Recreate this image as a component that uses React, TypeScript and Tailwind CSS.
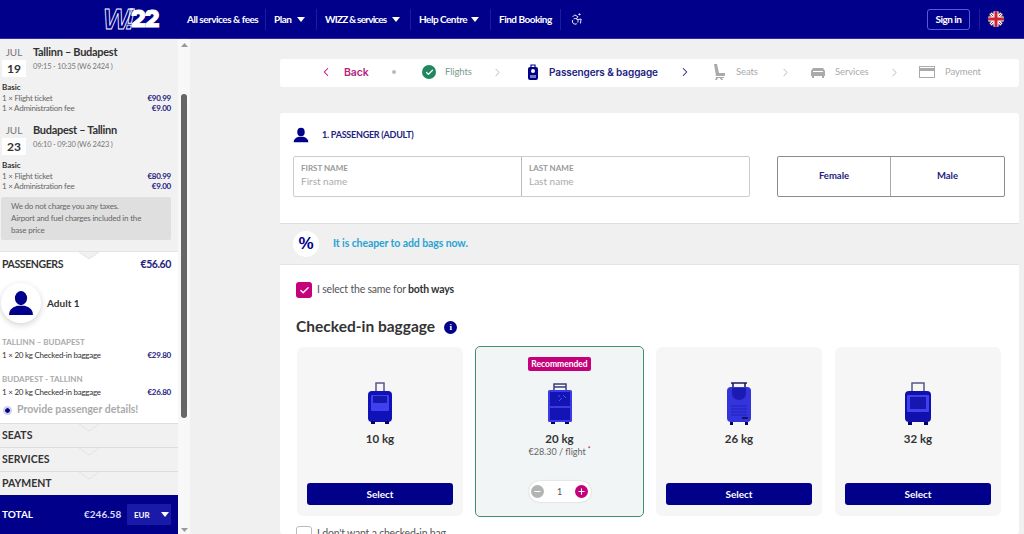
import React from "react";
import { Accessibility, Check, ChevronLeft, ChevronRight, Minus, Plus } from "lucide-react";

const Caret = ({ className = "" }: { className?: string }) => (
  <svg width="8" height="5" viewBox="0 0 8 5" className={className}><path d="M0 0h8L4 5z" fill="currentColor" /></svg>
);

const Person = ({ size }: { size: number }) => (
  <svg width={size} height={size} viewBox="0 0 24 24">
    <ellipse cx="12" cy="7.5" rx="5.6" ry="6.5" fill="#00008b" />
    <path d="M1 23c0-5 3-7 7.5-8.5h7C20 16 23 18 23 23z" fill="#00008b" />
  </svg>
);

const Row = ({ l, r, dark }: { l: string; r: string; dark?: boolean }) => (
  <div className={`flex justify-between text-[8px] tracking-[-0.25px] leading-[10px] h-[10px] pr-[7px] pl-[2px] ${dark ? "text-[#333]" : "text-[#666]"}`}>
    <span>{l}</span><span className="font-bold text-[#22227f]">{r}</span>
  </div>
);

const Flight = ({ d, t, s, a }: { d: string; t: string; s: string; a: string }) => (
  <div>
    <div className="flex h-[33px]">
      <div className="ml-[2px] w-[24px] flex flex-col items-center">
        <div className="h-[16px] text-[10px] leading-[16px] text-[#777]">JUL</div>
        <div className="h-[17px] w-[24px] bg-white text-center text-[12px] leading-[17px] font-bold text-[#333]">{d}</div>
      </div>
      <div className="ml-[7px]">
        <div className="text-[11px] tracking-[-0.3px] leading-[16px] font-bold text-[#333]">{t}</div>
        <div className="mt-[1px] text-[7.5px] tracking-[-0.2px] leading-[12px] text-[#777]">{s}</div>
      </div>
    </div>
    <div className="mt-[5px] pl-[2px] text-[8px] leading-[10px] h-[10px] font-bold text-[#333]">Basic</div>
    <div className="mt-[1px]"><Row l="1 × Flight ticket" r={a} /></div>
    <div><Row l="1 × Administration fee" r="€9.00" /></div>
  </div>
);

const Notch = ({ fill }: { fill: string }) => (
  <svg width="20" height="7" viewBox="0 0 20 7" className="mx-auto block"><path d="M0 0l10 7 10-7z" fill={fill} /><path d="M0 0l10 7 10-7" fill="none" stroke="#e2e2e2" /></svg>
);

const Section = ({ label, h }: { label: string; h: string }) => (
  <div className={`${h} bg-[#f1f1f1] border-t border-[#dddddd]`}>
    <div className="h-0 overflow-visible"><Notch fill="#f1f1f1" /></div>
    <div className="pl-[2px] pt-[4px] text-[10.5px] leading-[14px] font-bold text-[#333]">{label}</div>
  </div>
);

const Sidebar = () => (
  <div className="flex w-[190px] h-[495px] shrink-0">
    <div className="w-[178px] flex flex-col relative h-[495px]">
      <div className="h-[213px] bg-[#f1f1f1] pt-[5px] border-b border-[#e4e4e4]">
        <Flight d="19" t="Tallinn – Budapest" s="09:15 - 10:35 (W6 2424 )" a="€90.99" />
        <div className="mt-[9px]"><Flight d="23" t="Budapest – Tallinn" s="06:10 - 09:30 (W6 2423 )" a="€80.99" /></div>
        <div className="mt-[6px] ml-[1px] mr-[7px] h-[43px] bg-[#dfdfdf] rounded-[2px] pl-[10px] pt-[3px] text-[8px] tracking-[-0.2px] leading-[12px] text-[#666]">
          <div>We do not charge you any taxes.</div>
          <div>Airport and fuel charges included in the</div>
          <div>base price</div>
        </div>
      </div>
      <div className="h-[171px] bg-white">
        <div className="h-0"><Notch fill="#f1f1f1" /></div>
        <div className="flex justify-between pl-[2px] pr-[7px] pt-[5px] h-[31px] text-[10.5px] tracking-[-0.4px] leading-[14px] font-bold">
          <span className="text-[#333]">PASSENGERS</span><span className="text-[#22227f]">€56.60</span>
        </div>
        <div className="flex items-center h-[40px]">
          <div className="ml-[1px] w-[40px] h-[40px] rounded-full bg-white shadow-[0_2px_6px_rgba(0,0,0,0.18)] flex items-center justify-center"><Person size={26} /></div>
          <span className="ml-[6px] text-[10px] font-bold text-[#333]">Adult 1</span>
        </div>
        <div className="mt-[13px] pl-[2px] h-[12px] text-[8px] leading-[12px] font-bold text-[#aaa]">TALLINN – BUDAPEST</div>
        <div className="mt-[2px]"><Row dark l="1 × 20 kg Checked-in baggage" r="€29.80" /></div>
        <div className="mt-[13px] pl-[2px] h-[12px] text-[8px] leading-[12px] font-bold text-[#aaa]">BUDAPEST - TALLINN</div>
        <div className="mt-[2px]"><Row dark l="1 × 20 kg Checked-in baggage" r="€26.80" /></div>
        <div className="mt-[6px] flex items-center h-[14px]">
          <div className="ml-[5px] w-[5px] h-[5px] rounded-full bg-[#00008b] outline-2 outline-[#cfcfe8]" />
          <span className="ml-[7px] text-[10.5px] font-bold text-[#aaa]">Provide passenger details!</span>
        </div>
      </div>
      <Section label="SEATS" h="h-[24px]" />
      <Section label="SERVICES" h="h-[24px]" />
      <Section label="PAYMENT" h="h-[24px]" />
    </div>
    <div className="w-[12px] bg-[#f8f8f8] flex flex-col items-center">
      <svg width="7" height="4" viewBox="0 0 7 4" className="mt-[4px] text-[#999]"><path d="M0 4h7L3.5 0z" fill="currentColor" /></svg>
      <div className="mt-[47px] w-[6px] h-[324px] rounded-[3px] bg-[#666]" />
    </div>
  </div>
);

const Footer = () => (
  <div className="flex w-[190px] h-[39px]">
    <div className="w-[178px] bg-[#00008b] flex items-center text-white font-bold text-[10px] pl-[2px]">
      <span className="w-[82px]">TOTAL</span>
      <span className="w-[36px] whitespace-nowrap text-[#d9d9f5]">€246.58</span>
      <div className="ml-[7px] w-[44px] h-[21px] bg-[#1a1aa8] rounded-[1px] flex items-center pl-[7px] text-[8px]">
        <span>EUR</span><Caret className="ml-[11px]" />
      </div>
    </div>
    <div className="w-[12px] bg-[#f8f8f8] flex justify-center">
      <svg width="7" height="4" viewBox="0 0 7 4" className="mt-[33px] text-[#999]"><path d="M0 0h7L3.5 4z" fill="currentColor" /></svg>
    </div>
  </div>
);

const NavSep = () => <div className="w-px h-[21px] bg-[#1c1c9c]" />;

const Header = () => (
  <div className="h-[39px] bg-[#00008b] border-b border-[#2a2aa5] flex items-center whitespace-nowrap text-white text-[10px] tracking-[-0.5px] font-bold shrink-0">
    <div className="ml-[103px] w-[60px] h-[30px] flex items-center leading-none italic">
      <span className="w-[28px] font-['Liberation_Sans',sans-serif] text-[29px] font-bold tracking-[-5px] text-transparent [-webkit-text-stroke:0.8px_#ffffff]">W!</span>
      <span className="font-['Inter',sans-serif] text-[23px] font-black not-italic tracking-[-1px] [-webkit-text-stroke:0.8px_#ffffff]">22</span>
    </div>
    <span className="ml-[24px] w-[70px]">All services &amp; fees</span>
    <span className="ml-[8px]" /><NavSep />
    <span className="ml-[8px] w-[18px]">Plan</span><Caret className="ml-[5px]" />
    <span className="ml-[11px]" /><NavSep />
    <span className="ml-[8px] w-[61px] tracking-[-0.8px]">WIZZ &amp; services</span><Caret className="ml-[6px]" />
    <span className="ml-[10px]" /><NavSep />
    <span className="ml-[8px] w-[47px]">Help Centre</span><Caret className="ml-[5px]" />
    <span className="ml-[11px]" /><NavSep />
    <span className="ml-[8px] w-[53px]">Find Booking</span>
    <span className="ml-[8px]" /><NavSep />
    <Accessibility size={14} strokeWidth={1.6} className="ml-[9px]" />
    <div className="ml-auto w-[43px] h-[21px] border border-[#5a5ae0] rounded-[3px] flex items-center justify-center">Sign in</div>
    <div className="ml-[9px] w-px h-[21px] bg-[#1c1c9c]" />
    <svg width="16" height="16" viewBox="0 0 16 16" className="ml-[8px] mr-[20px]">
      <clipPath id="fl"><circle cx="8" cy="8" r="8" /></clipPath>
      <g clipPath="url(#fl)">
        <rect width="16" height="16" fill="#1f2f7a" />
        <path d="M0 0L16 16M16 0L0 16" stroke="#fff" strokeWidth="3" />
        <path d="M0 0L16 16M16 0L0 16" stroke="#d0202f" strokeWidth="1" />
        <path d="M8 0v16M0 8h16" stroke="#fff" strokeWidth="5" />
        <path d="M8 0v16M0 8h16" stroke="#d0202f" strokeWidth="3" />
      </g>
    </svg>
  </div>
);

const Chev = ({ className }: { className: string }) => <ChevronRight size={13} strokeWidth={1.5} className={className} />;

const Stepper = () => (
  <div className="mt-[20px] h-[28px] w-[739px] bg-white rounded-[3px] flex items-center pb-[2px] whitespace-nowrap text-[9.5px] tracking-[-0.1px] text-[#aaa]">
    <ChevronLeft size={14} strokeWidth={1.8} className="ml-[39px] text-[#c2007a]" />
    <span className="ml-[11px] w-[24px] mt-[2px] text-[10.5px] font-semibold text-[#b5267f] font-['Inter',sans-serif]">Back</span>
    <div className="ml-[24px] w-[4px] h-[4px] rounded-full bg-[#bbb]" />
    <div className="ml-[26px] w-[14px] h-[14px] rounded-full bg-[#21875f] flex items-center justify-center">
      <Check size={9} strokeWidth={3.5} className="text-white" />
    </div>
    <span className="ml-[9px] w-[27px] text-[#7a9c8e]">Flights</span>
    <Chev className="ml-[18.5px] text-[#aaa]" />
    <svg width="12" height="17" viewBox="0 0 12 17" className="ml-[23.5px]">
      <path d="M4 3V1h4v2" fill="none" stroke="#00008b" strokeWidth="1.2" />
      <rect x="1" y="3" width="10" height="13" rx="2" fill="#00008b" />
      <circle cx="6" cy="7" r="2" fill="#fff" /><rect x="3" y="11" width="6" height="3" fill="#7777c5" />
    </svg>
    <span className="ml-[10px] w-[109px] text-[10px] font-semibold text-[#22227f] font-['Inter',sans-serif]">Passengers &amp; baggage</span>
    <ChevronRight size={14} strokeWidth={1.8} className="ml-[20px] text-[#22227f]" />
    <svg width="13" height="16" viewBox="0 0 13 16" className="ml-[20.5px] text-[#aaa]">
      <path d="M1 0h3l2 9h6v3H3z M3 13h8v1H9l1 2H8l-1-2H5l-1 2H2l1-2z" fill="currentColor" />
    </svg>
    <span className="ml-[10.5px] w-[21px]">Seats</span>
    <Chev className="ml-[21.5px]" />
    <svg width="16" height="11" viewBox="0 0 16 11" className="ml-[18.5px] text-[#aaa]">
      <path d="M3 1h10l2 3v5h-1v2h-2V9H4v2H2V9H1V4z" fill="currentColor" /><path d="M3 4.5h10" stroke="#fff" />
    </svg>
    <span className="ml-[9px] w-[32px]">Services</span>
    <Chev className="ml-[20.5px]" />
    <svg width="16" height="12" viewBox="0 0 16 12" className="ml-[18.5px] text-[#aaa]">
      <rect x=".5" y=".5" width="15" height="11" fill="none" stroke="currentColor" /><rect x="0" y="2" width="16" height="3" fill="currentColor" />
    </svg>
    <span className="ml-[10px]">Payment</span>
  </div>
);

const Bag1 = () => (
  <svg width="24" height="44" viewBox="0 0 24 44">
    <path d="M8 13V2h8v11" fill="none" stroke="#55558c" strokeWidth="1.5" />
    <rect x="0" y="10" width="24" height="31" rx="4" fill="#1111b8" />
    <rect x="3" y="14" width="18" height="16" rx="1" fill="#4040ee" />
    <rect x="5" y="15" width="14" height="7" fill="#1616b0" />
    <rect x="3" y="40" width="4" height="3" fill="#00006b" /><rect x="17" y="40" width="4" height="3" fill="#00006b" />
  </svg>
);
const Bag2 = () => (
  <svg width="26" height="44" viewBox="0 0 26 44">
    <path d="M7 9V3h12v6M7 6h12" fill="none" stroke="#3d3d78" strokeWidth="1.5" />
    <rect x="1" y="9" width="24" height="32" rx="1.5" fill="#3a3ae6" />
    <rect x="3" y="11" width="20" height="14" fill="#1414b4" />
    <rect x="3" y="27" width="20" height="12" fill="#1414b4" />
    <path d="M12 20l3-3M16 14l3 3M11 15h2" stroke="#5050f0" />
    <rect x="4" y="41" width="4" height="2" fill="#00006b" /><rect x="18" y="41" width="4" height="2" fill="#00006b" />
  </svg>
);
const Bag3 = () => (
  <svg width="26" height="44" viewBox="0 0 26 44">
    <path d="M7 6V2h12v4M5 2h16" fill="none" stroke="#1c1c5e" strokeWidth="1.6" />
    <rect x="1" y="6" width="24" height="35" rx="4" fill="#3434dc" />
    <path d="M6 7h14v6a7 6 0 0 1-14 0z" fill="#1b1bb4" />
    <path d="M5 25h16M5 28h16M5 31h16M5 34h16" stroke="#2020bc" />
    <rect x="16" y="36" width="6" height="2" fill="#14145e" />
    <rect x="4" y="41" width="3" height="3" fill="#00006b" /><rect x="19" y="41" width="3" height="3" fill="#00006b" />
  </svg>
);
const Bag4 = () => (
  <svg width="28" height="44" viewBox="0 0 28 44">
    <path d="M8 12V2h12v10" fill="none" stroke="#55558c" strokeWidth="1.5" />
    <rect x="1" y="10" width="26" height="31" rx="4" fill="#1010ac" />
    <rect x="3" y="14" width="22" height="17" rx="1" fill="#4040ee" />
    <rect x="6" y="16" width="16" height="12" fill="#1616b0" />
    <rect x="4" y="41" width="4" height="3" fill="#00006b" /><rect x="20" y="41" width="4" height="3" fill="#00006b" />
  </svg>
);

const PlainCard = ({ icon, kg }: { icon: React.ReactNode; kg: string }) => (
  <div className="w-[166px] h-[169px] bg-[#f6f6f7] rounded-[6px] flex flex-col items-center">
    <div className="mt-[34px] h-[44px] flex items-center">{icon}</div>
    <div className="mt-[7px] text-[11.5px] leading-[14px] font-bold text-[#333]">{kg}</div>
    <button className="mt-[37px] w-[146px] h-[22px] rounded-[3px] bg-[#00008b] text-white text-[10px] font-bold">Select</button>
  </div>
);

const Main = () => (
  <div className="flex-1 h-[495px] pl-[90px] overflow-hidden">
    <Stepper />
    <div className="mt-[26px] w-[739px] h-[421px] bg-white rounded-[3px] overflow-hidden">
      <div className="h-[111px] border-b border-[#dfdfdf]">
        <div className="flex items-center h-[43px] pl-[13px]">
          <Person size={16} />
          <span className="ml-[13px] text-[9px] tracking-[-0.25px] font-bold text-[#22227f]">1. PASSENGER (ADULT)</span>
        </div>
        <div className="flex ml-[13px]">
          <div className="w-[457px] h-[41px] border border-[#cccccc] rounded-[2px] flex">
            <div className="w-[228px] border-r border-[#bbbbbb] pl-[7px] pt-[6px]">
              <div className="text-[8px] leading-[10px] font-bold text-[#999]">FIRST NAME</div>
              <div className="mt-[1px] text-[10px] leading-[14px] text-[#aaa]">First name</div>
            </div>
            <div className="flex-1 pl-[7px] pt-[6px]">
              <div className="text-[8px] leading-[10px] font-bold text-[#999]">LAST NAME</div>
              <div className="mt-[1px] text-[10px] leading-[14px] text-[#aaa]">Last name</div>
            </div>
          </div>
          <div className="ml-[27px] w-[228px] h-[41px] border border-[#8c8c8c] rounded-[2px] flex text-[9.5px] font-bold text-[#22227f]">
            <div className="w-[113px] border-r border-[#aaaaaa] flex items-center justify-center">Female</div>
            <div className="flex-1 flex items-center justify-center">Male</div>
          </div>
        </div>
      </div>
      <div className="h-[41px] bg-[#f0f0f0] border-b border-[#e4e4e4] flex items-center pl-[13px]">
        <div className="w-[26px] h-[26px] rounded-full bg-white flex items-center justify-center text-[17px] font-bold text-[#00008b] font-['Liberation_Sans',sans-serif]">%</div>
        <span className="ml-[14px] text-[10.5px] tracking-[-0.1px] font-bold text-[#2ba3d3]">It is cheaper to add bags now.</span>
      </div>
      <div className="pl-[16px] pt-[17px]">
        <div className="flex items-center h-[16px]">
          <div className="w-[16px] h-[16px] rounded-[3px] bg-[#c4007a] flex items-center justify-center">
            <Check size={11} strokeWidth={3} className="text-white" />
          </div>
          <span className="ml-[5px] text-[10.5px] tracking-[-0.2px] text-[#555]">I select the same for <b className="text-[#333]">both ways</b></span>
        </div>
        <div className="mt-[20px] flex items-center h-[18px]">
          <span className="text-[15.5px] font-bold text-[#333]">Checked-in baggage</span>
          <div className="ml-[9px] w-[13px] h-[13px] rounded-full bg-[#00008b] flex items-center justify-center text-white text-[9px] leading-none font-black font-['Liberation_Serif',serif]">i</div>
        </div>
        <div className="mt-[10px] ml-[1px] flex items-center gap-[12px]">
          <PlainCard icon={<Bag1 />} kg="10 kg" />
          <div className="relative w-[169px] h-[171px] bg-[#f2f5f5] border-[1.5px] border-[#3f8f70] rounded-[5px] flex flex-col items-center">
            <div className="mt-[10px] h-[14px] px-[3px] rounded-[2px] bg-[#c4007a] text-white text-[8.5px] leading-[14px] font-bold">Recommended</div>
            <div className="mt-[10px] h-[44px] flex items-center"><Bag2 /></div>
            <div className="mt-[7px] text-[11.5px] leading-[14px] font-bold text-[#333]">20 kg</div>
            <div className="text-[9px] leading-[11px] text-[#666]">€28.30 / flight<sup className="ml-[2px] text-[#d0004f]">*</sup></div>
            <div className="mt-[24px] w-[62px] h-[21px] rounded-full bg-white flex items-center justify-between px-[2px] shadow-[0_0_2px_rgba(0,0,0,0.2)]">
              <div className="w-[13px] h-[13px] rounded-full bg-[#b3b3b3] flex items-center justify-center"><Minus size={9} strokeWidth={3} className="text-white" /></div>
              <span className="text-[9px] text-[#555]">1</span>
              <div className="w-[13px] h-[13px] rounded-full bg-[#c4007a] flex items-center justify-center"><Plus size={9} strokeWidth={3} className="text-white" /></div>
            </div>
          </div>
          <PlainCard icon={<Bag3 />} kg="26 kg" />
          <div className="ml-[1px]"><PlainCard icon={<Bag4 />} kg="32 kg" /></div>
        </div>
        <div className="mt-[9px] flex items-center h-[16px]">
          <div className="w-[16px] h-[16px] rounded-[3px] border border-[#bbbbbb] bg-white" />
          <span className="ml-[5px] text-[10.5px] tracking-[-0.2px] text-[#555]">I don't want a checked-in bag</span>
        </div>
      </div>
    </div>
  </div>
);

export default function App() {
  return (
    <div className="w-[1024px] h-[534px] overflow-hidden bg-[#f0f0f0] flex flex-col font-['Lato',sans-serif]">
      <Header />
      <div className="flex h-[495px]">
        <div className="w-[190px] shrink-0 flex flex-col">
          <div className="h-[456px] overflow-hidden"><Sidebar /></div>
          <Footer />
        </div>
        <Main />
      </div>
    </div>
  );
}
